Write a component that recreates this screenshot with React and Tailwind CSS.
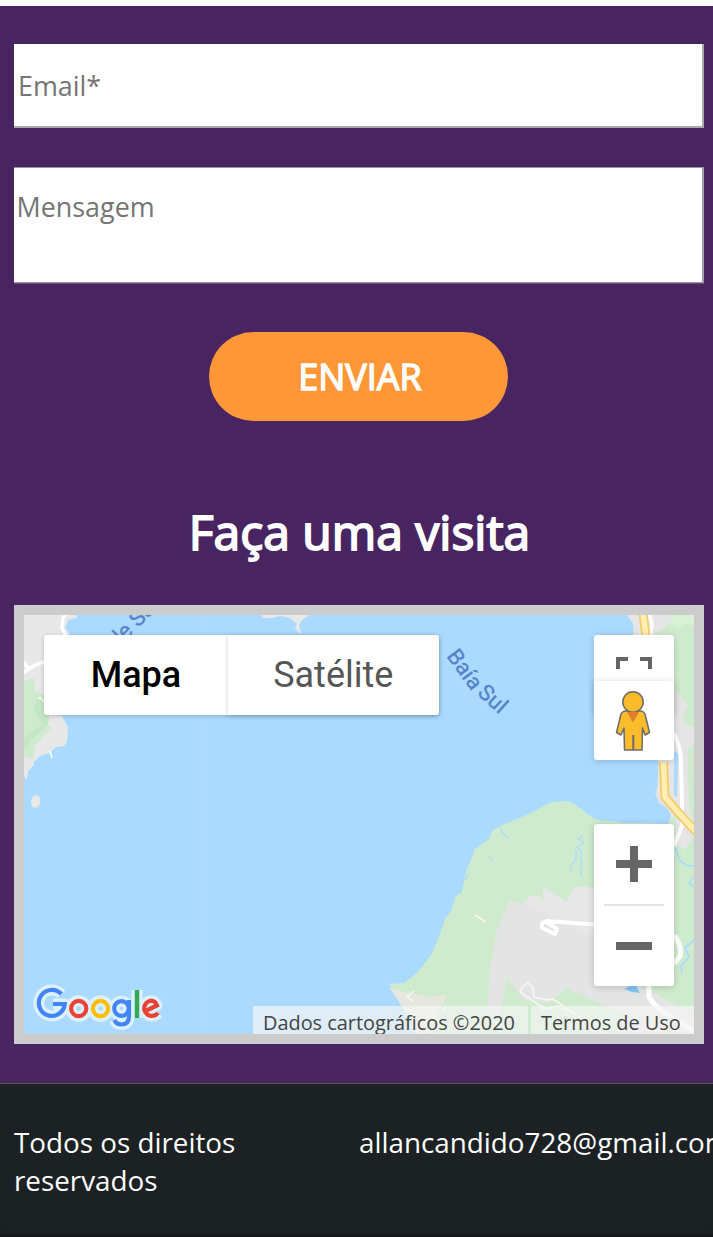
import React from "react";

function Land() {
  return (
    <svg className="block h-[419px] w-[670px]" viewBox="24 615 670 419">
      <rect x="24" y="615" width="670" height="419" fill="#aadaff" />
      <path d="M207.5 615V1034" stroke="#b4dcfa" strokeWidth="1" />

      {/* western shore */}
      <path d="M24 615H77V618L68 620L65 628L69 633L68 640L76 660V700L50 714L62 716L68 727L67 742L64 746L56 747L49 753L40 756L34 762V765L28 771L27 780L24 776Z" fill="#e8e8e8" />
      <path d="M24 680L35 678L34 691L44 695L49 700V716L48 724L52 729L45 734L35 746L33 759L24 756Z" fill="#ceeccd" />
      <path d="M36 700L44 697L49 714L48 724L24 748V738L42 724L34 711Z" fill="#c5e6c6" />
      <path d="M67 613L63 618L62 628L66 636M24 662L29 670M24 673Q30 666 46 661" fill="none" stroke="#fff" strokeWidth="3.5" />
      <path d="M38 698L41 698L44 702M50 751L52 758" fill="none" stroke="#fff" strokeWidth="1.500" />
      <path d="M32 797L37 795L40 798V804L37 808L32 807L31 802Z" fill="#e8e8e4" />
      <path d="M261 615L263 618L273 618L280 616L290 618L297 624L295 628L299 633H301L299 625L302 620L310 615Z" fill="#e8e8e8" />

      {/* peninsula */}
      <path d="M389 984L404 983L418 972L431 955L439 937L445 919L452 909L455 897L462 892L466 871L474 853V850L489 839L492 831L500 826L522 817L535 811L549 803L562 801L571 802L583 810L590 816L594 815L592 818L603 821L613 821L623 823L640 823L668 824L671 815H694V1034H415L409 1017L397 994Z" fill="#ceeccd" />
      <path d="M389 987L401 991L431 997L448 995L437 1012L430 1034H415L409 1017L397 999Z" fill="#e6e7de" />
      <path d="M510 900L522 904L530 895L538 897L543 901V887L566 902L574 890L585 886L600 890L630 892V980L694 1015V1034H592L610 1012L566 988L550 1003L525 1000L507 978L499 1019L487 1010L490 970L497 930Z" fill="#e4e4e4" />
      <path d="M525 904L531 896L540 896L543 901V887L566 902L574 888L584 886L600 892L640 890V955L558 921Z" fill="#e7e7e7" />
      <path d="M550 1003L566 988L625 1014L613 1034H545ZM507 978L527 1005L507 1025L501 1015Z" fill="#ceeccd" />
      <path d="M500 827L502 832L509 839M488 856L493 861M469 873L465 880M583 836L578 839L584 842L577 847L581 851V877M576 850V860L571 866V872" fill="none" stroke="#aadaff" strokeWidth="1.300" />
      <path d="M675 847L680 861L686 865L694 866M694 876L689 883L694 887M694 940L685 948L689 957L681 966L682 974" fill="none" stroke="#aadaff" strokeWidth="1.700" />
      <path d="M624 989L635 984L640 993L632 992Z" fill="#80c5f4" />

      {/* eastern shore */}
      <path d="M627 615L633 624L634 640L660 700L658 775L657 790L655 792L659 803L668 809L671 815L669 828H675L677 845L684 850L694 836V615Z" fill="#e5e5e5" />
      <path d="M653 636L665 627L678 615H694V726L685 725L683 716L688 705L677 692L665 650ZM688 749L694 745V824L689 804ZM670 822L675 813L677 825L672 828Z" fill="#ceeccd" />
      <path d="M672 615H694V625L684 624L678 629L670 624Z" fill="#d9f1d7" />
      <path d="M674 751V795L677 797L678 754Z" fill="#aadaff" />
      <path d="M649 613L652 624L650 637M674 733Q681 748 681 763L682 802V826L674 846" fill="none" stroke="#fff" strokeWidth="4" />
      <path d="M643 613L646 637M663.500 762L665 797L676 810L698 834" fill="none" stroke="#f6ca67" strokeWidth="9" />
      <path d="M643 613L646 637M663.500 762L665 797L676 810L698 834" fill="none" stroke="#feeeb0" strokeWidth="5.600" />

      <path d="M600 925L547 921L542 923V928L555 934L557 929L545 921" fill="none" stroke="#fff" strokeWidth="4" strokeLinejoin="round" />
      <path d="M674 935Q682 945 680 956L674 964M649 980V997Q658 1012 679 1021L696 1033" fill="none" stroke="#fff" strokeWidth="5" />
      <path d="M475 915L486 922M414 991L407 997L413 1001M446 1006L442 1013M545 1009L520 992L523 986L528 983L533 988L534 997L547 1000L553 999L604 1034M541 1010L558 1006L567 1011" fill="none" stroke="#f7f7f3" strokeWidth="1.600" />

      <g fill="#5581ca" stroke="#5581ca" strokeWidth=".3" fontFamily="Roboto, sans-serif" fontSize="22">
        <text transform="translate(117 649) rotate(-45)">de Sul</text>
        <text transform="translate(446 656) rotate(54)" letterSpacing=".2">Baía</text>
        <text transform="translate(476.500 694) rotate(42)" letterSpacing=".2">Sul</text>
      </g>
    </svg>
  );
}

function Pegman() {
  return (
    <svg className="relative right-px h-[60px] w-[36px]" viewBox="0 0 36 60" fill="#fbbc2c" stroke="#6b6b6b" strokeWidth="1.500" strokeLinejoin="round">
      <path d="M10 20H26Q29 20.500 30 23L34.500 41.500L30 44L27.500 37L27 59H9.500L9 37L6 44L1.500 41.500L6 23Q7 20.500 10 20Z" />
      <path d="M18.300 44V59" strokeWidth="2" />
      <circle cx="18" cy="11" r="10.200" />
      <path d="M12 21H24L18 31.500Z" fill="#e07e2d" stroke="none" />
    </svg>
  );
}

function MapControls() {
  return (
    <>
      <div className="absolute left-5 top-5 flex h-[79.500px] rounded-[3px] font-[Roboto,sans-serif] text-[36px] leading-[81px] shadow-[0_1px_5px_rgba(0,0,0,0.2)]">
        <button className="w-[184px] rounded-l-[3px] bg-white text-center font-medium text-black">Mapa</button>
        <button className="w-[210.5px] rounded-r-[3px] bg-white text-center text-[#565656] shadow-[0_1px_5px_rgba(0,0,0,0.18)]">Satélite</button>
      </div>
      <div className="absolute left-[570px] top-5 h-20 w-20 rounded-[3px] bg-white shadow-[0_1px_7px_rgba(0,0,0,0.18)]">
        <svg className="size-20" viewBox="0 0 80 80" fill="none" stroke="#666" strokeWidth="4">
          <path d="M24 34V24H34M46 24H56V34M24 46V56H34M46 56H56V46" />
        </svg>
      </div>
      <div className="absolute left-[570px] top-[66px] flex h-[79px] w-20 items-center justify-center rounded-[3px] bg-white shadow-[0_1px_7px_rgba(0,0,0,0.18)]">
        <Pegman />
      </div>
      <div className="absolute left-[570px] top-[209px] rounded-[3px] bg-white shadow-[0_1px_7px_rgba(0,0,0,0.2)]">
        <svg className="h-[162px] w-20" viewBox="0 0 80 162">
          <path d="M36 22h8v14h14v8H44v14h-8V44H22v-8h14zM22 118h36v8H22z" fill="#666" />
          <path d="M10 81H70" stroke="#e6e6e6" strokeWidth="2" />
        </svg>
      </div>
    </>
  );
}

function GoogleMark() {
  return (
    <svg className="absolute left-0 top-[365px] h-[54px] w-[150px]" viewBox="24 980 150 54" fill="none">
      <g stroke="#fff" opacity=".6" strokeWidth="11" strokeLinejoin="round">
        <path d="M61.300 994A13 13 0 1 0 64.800 1004H53" />
        <circle cx="78.700" cy="1008.500" r="7.800" />
        <circle cx="100.500" cy="1008.500" r="7.800" />
        <circle cx="121.500" cy="1008.500" r="7.300" />
        <path d="M129 1000V1016Q129 1024.500 121.500 1024.500Q116 1024.500 114.500 1020" />
        <path d="M137 990V1018" />
        <path d="M144.500 1011.500L157 1005.500Q155 1000.500 150.500 1000.700A7.700 7.700 0 1 0 158 1013" />
      </g>
      <g strokeWidth="4.200">
        <path d="M61.300 994A13 13 0 1 0 64.800 1004H53" stroke="#4285f4" />
        <circle cx="78.700" cy="1008.500" r="7.600" stroke="#ea4335" />
        <circle cx="100.500" cy="1008.500" r="7.600" stroke="#fbbc05" />
        <circle cx="121.500" cy="1008.500" r="7.300" stroke="#4285f4" />
        <path d="M129 1000V1016Q129 1024.500 121.500 1024.500Q116 1024.500 114.500 1020" stroke="#4285f4" />
        <path d="M137 990V1018" stroke="#34a853" strokeWidth="4.500" />
        <path d="M144.500 1011.500L157 1005.500Q155 1000.500 150.500 1000.700A7.700 7.700 0 1 0 158 1013" stroke="#ea4335" />
      </g>
    </svg>
  );
}

export default function App() {
  return (
    <div className="h-[1237px] w-[713px] overflow-hidden bg-[#482561] font-['Open_Sans',sans-serif]">
      <div className="h-1.5 bg-white" />
      <main className="flex h-[1077px] flex-col items-center pl-3.5 pr-[9px] pt-[38px]">
        <div className="flex h-[84px] w-[690px] items-center border-b-2 border-r-2 border-[#aaa7ad] bg-white pl-1 pt-[3px] text-[26.9px] text-[#757575]">
          Email*
        </div>
        <div className="mt-[39px] h-[116px] w-[690px] border-b border-r-2 border-t border-b-[#98919f] border-r-[#a39fa8] border-t-[#a08fae] bg-white pl-[2.500px] pt-5 text-[26.9px] leading-[37px] text-[#757575] shadow-[0_1px_0_#665078]">
          Mensagem
        </div>
        <button className="mr-px mt-[49px] h-[88.500px] w-[299px] rounded-full bg-[#fd9737] pl-[3px] pt-px text-[36px] text-white [-webkit-text-stroke:1.400px_white]">
          ENVIAR
        </button>
        <h2 className="mt-[78.500px] pl-px text-[48px] leading-[66px] text-white [-webkit-text-stroke:1.800px_white]">Faça uma visita</h2>
        <div className="relative mt-10 h-[439px] w-[690px] border-10 border-[#ccc]">
          <Land />
          <MapControls />
          <GoogleMark />
          <div className="absolute bottom-0 right-0 flex h-[28px] gap-[3px] overflow-hidden text-[19.9px] leading-[34px] text-[#444]">
            <span className="w-[275px] whitespace-nowrap bg-[#f5f5f5]/70 pl-2.5">Dados cartográficos ©2020</span>
            <span className="w-[163px] whitespace-nowrap bg-[#f5f5f5]/70 pl-2.5">Termos de Uso</span>
          </div>
        </div>
      </main>
      <footer className="grid h-[154px] grid-cols-[345px_1fr] border-t border-[#56535c] bg-[#1c2224] pl-3.5 pt-[39px] text-[27.8px] leading-[38px] text-white shadow-[inset_0_-5px_4px_-2px_#13171b]">
        <p className="w-[300px]">Todos os direitos<br />reservados</p>
        <p className="whitespace-nowrap">allancandido728@gmail.com</p>
      </footer>
    </div>
  );
}
